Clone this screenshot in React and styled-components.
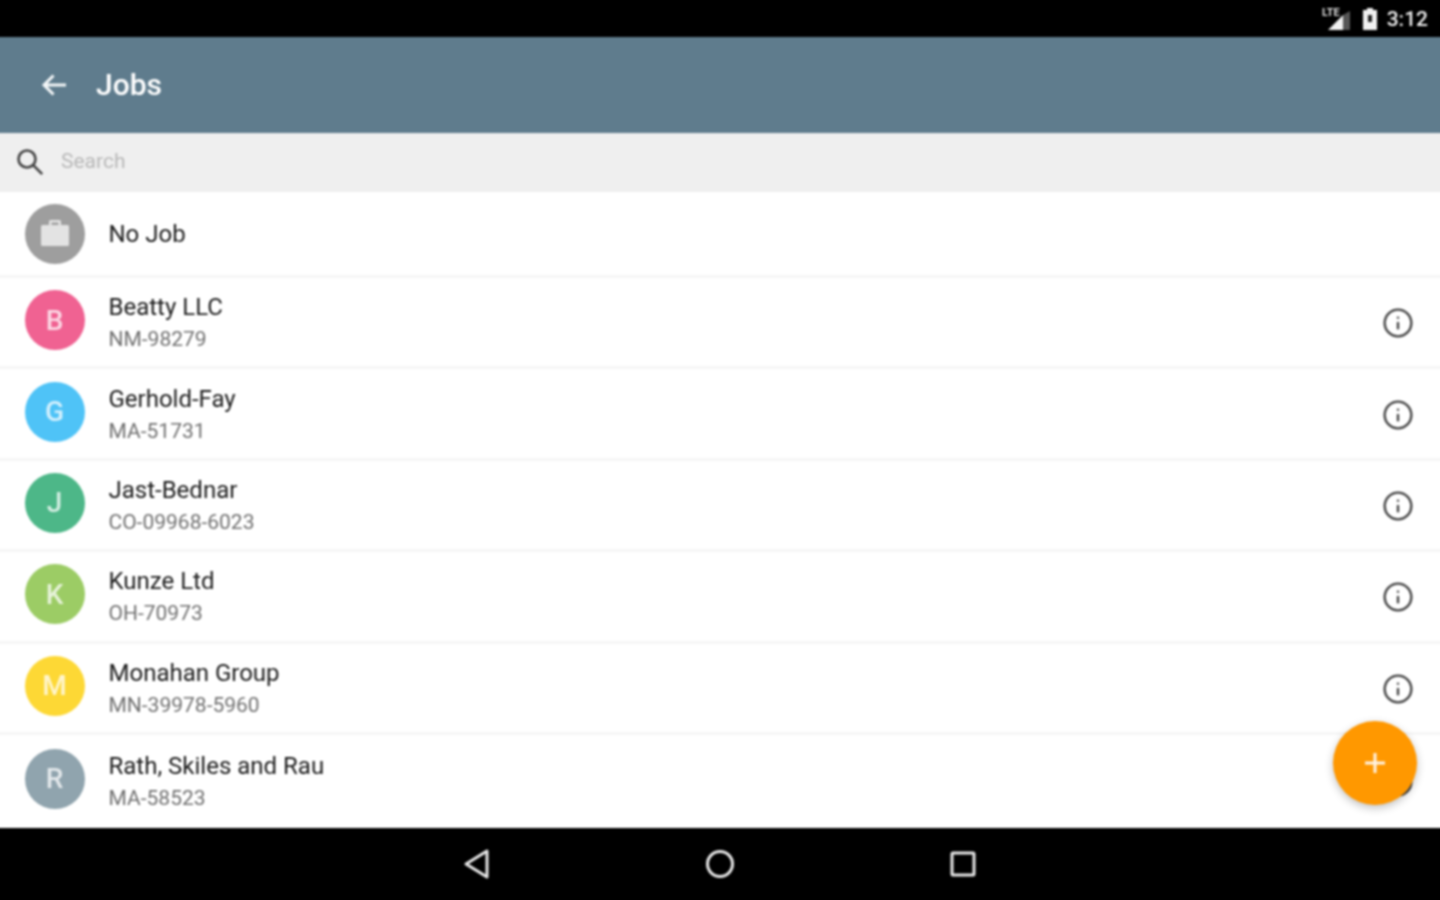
import React from "react";
import styled, { createGlobalStyle } from "styled-components";
import { Info } from "lucide-react";

const Global = createGlobalStyle`
  html, body { margin: 0; padding: 0; background: #fff; }
  body { font-family: Roboto, "Liberation Sans", sans-serif; overflow: hidden; }
`;

const Viewport = styled.div`
  width: 1440px;
  height: 900px;
  overflow: hidden;
`;
const Screen = styled.div`
  position: relative;
  width: 1456px;
  height: 916px;
  margin: -8px;
  display: flex;
  flex-direction: column;
  background: #fff;
  filter: blur(0.9px);
`;
const StatusBar = styled.div`
  height: 45px;
  background: #000;
  display: flex;
  align-items: center;
  justify-content: flex-end;
  padding: 8px 20px 0 0;
  box-sizing: border-box;
  color: #f0f0f0;
  flex: none;
`;
const StatusGap = styled.span`
  width: 9px;
`;
const Clock = styled.span`
  font-size: 21px;
  font-weight: 500;
  margin-left: 8px;
`;
const AppBar = styled.header`
  height: 96px;
  flex: none;
  background: #5f7c8d;
  display: flex;
  align-items: center;
  padding-left: 48px;
  color: #fff;
  box-sizing: border-box;
`;
const Title = styled.h1`
  margin: 0 0 0 28px;
  font-size: 30px;
  font-weight: 500;
  line-height: 1;
`;
const SearchBar = styled.div`
  height: 59px;
  flex: none;
  background: #efefef;
  display: flex;
  align-items: center;
  padding-left: 24px;
  box-sizing: border-box;
`;
const SearchHint = styled.span`
  font-size: 21px;
  color: #b8b8b8;
  margin: 0 0 4px 17px;
`;
const List = styled.div`
  flex: 1;
  display: flex;
  flex-direction: column;
`;
const Row = styled.div`
  height: ${(p) => p.$h}px;
  flex: none;
  box-sizing: border-box;
  display: flex;
  align-items: center;
  padding: 0 34px 0 32.500px;
  border-bottom: 3px solid #f6f6f6;
  &:last-child {
    border-bottom: none;
  }
`;
const Avatar = styled.div`
  width: 60px;
  height: 60px;
  border-radius: 50%;
  background: ${(p) => p.$color};
  color: rgba(255, 255, 255, 0.75);
  display: flex;
  align-items: center;
  justify-content: center;
  font-size: 28px;
  font-weight: 500;
  flex: none;
  margin-bottom: ${(p) => p.$lift || 0}px;
`;
const Texts = styled.div`
  margin-left: 24px;
  flex: 1;
  display: flex;
  flex-direction: column;
  gap: 4px;
  padding-top: ${(p) => p.$drop || 0}px;
`;
const Name = styled.div`
  font-size: 24px;
  line-height: 28px;
  color: #1c1c1c;
`;
const Code = styled.div`
  font-size: 21px;
  line-height: 28px;
  color: #707070;
`;
const InfoButton = styled.div`
  width: 32px;
  height: 32px;
  color: #444;
  display: flex;
  margin-top: 2px;
`;
const Fab = styled.button`
  position: absolute;
  left: 1340.500px;
  top: 729px;
  width: 84px;
  height: 84px;
  border-radius: 50%;
  border: none;
  padding: 0;
  background: #ff9800;
  box-shadow: 0 3px 8px rgba(0, 0, 0, 0.25);
  display: flex;
  align-items: center;
  justify-content: center;
`;
const NavBar = styled.nav`
  height: 80px;
  flex: none;
  background: #000;
  display: flex;
  align-items: center;
  justify-content: center;
  gap: 214px;
  padding-bottom: 8px;
  box-sizing: border-box;
`;

const Back = () => (
  <svg width="28" height="28" viewBox="0 0 28 28" fill="none" stroke="#f4f7f8" strokeWidth="3">
    <path d="M26 14H4M13.5 4.500 4 14l9.500 9.500" />
  </svg>
);
const SearchIcon = () => (
  <svg width="28" height="28" viewBox="0 0 28 28" fill="none" stroke="#444" strokeWidth="2.600">
    <circle cx="11" cy="10" r="8.500" />
    <path d="m17.200 16.200 9 9" />
  </svg>
);
const Case = () => (
  <svg width="32" height="32" viewBox="0 0 32 32">
    <path fill="#e3e3e3" fillRule="evenodd" d="M10 7V3.500A1.500 1.500 0 0 1 11.500 2h9A1.500 1.500 0 0 1 22 3.500V7h6.500A1.500 1.500 0 0 1 30 8.500v18a1.500 1.500 0 0 1-1.500 1.500h-25A1.500 1.500 0 0 1 2 26.500v-18A1.500 1.500 0 0 1 3.500 7zm2.500 0h7V4.500h-7z" />
  </svg>
);
const Plus = () => (
  <svg width="24" height="24" viewBox="0 0 24 24" stroke="#fff" strokeWidth="3" opacity=".9">
    <path d="M12 2v20M2 12h20" />
  </svg>
);
const Signal = () => (
  <svg width="30" height="26" viewBox="0 0 30 26">
    <path fill="#555" d="M28 5v19h-7V9z" />
    <path fill="#f0f0f0" d="M21 9v15H6z" />
    <text x="0" y="10" fontSize="11" fontWeight="700" fill="#ddd" fontFamily="Roboto, sans-serif">LTE</text>
  </svg>
);
const Battery = () => (
  <svg width="18" height="24" viewBox="0 0 18 24">
    <path fill="#f0f0f0" d="M6 1h6v2h4v20H2V3h4z" />
    <path fill="#222" d="M7 8h4v7H7z" />
  </svg>
);
const NavBack = () => (
  <svg width="28" height="32" viewBox="0 0 28 32" fill="none" stroke="#e8e8e8" strokeWidth="3" strokeLinejoin="round">
    <path d="M24 3v26L3 16z" />
  </svg>
);
const NavHome = () => (
  <svg width="30" height="30" viewBox="0 0 30 30" fill="none" stroke="#e8e8e8" strokeWidth="3">
    <circle cx="15" cy="15" r="12.500" />
  </svg>
);
const NavRecent = () => (
  <svg width="28" height="28" viewBox="0 0 28 28" fill="none" stroke="#e8e8e8" strokeWidth="3" strokeLinejoin="round">
    <rect x="3" y="3" width="22" height="22" rx="1" />
  </svg>
);

const jobs = [
  ["B", "#f06292", "Beatty LLC", "NM-98279"],
  ["G", "#4fc3f7", "Gerhold-Fay", "MA-51731"],
  ["J", "#4db788", "Jast-Bednar", "CO-09968-6023"],
  ["K", "#9ccc65", "Kunze Ltd", "OH-70973"],
  ["M", "#fdd835", "Monahan Group", "MN-39978-5960"],
  ["R", "#90a4ae", "Rath, Skiles and Rau", "MA-58523"],
];

export default function App() {
  return (
    <Viewport>
      <Global />
      <Screen>
        <StatusBar>
          <Signal />
          <StatusGap />
          <Battery />
          <Clock>3:12</Clock>
        </StatusBar>
        <AppBar>
          <Back />
          <Title>Jobs</Title>
        </AppBar>
        <SearchBar>
          <SearchIcon />
          <SearchHint>Search</SearchHint>
        </SearchBar>
        <List>
          <Row $h={86}>
            <Avatar $color="#9e9e9e"><Case /></Avatar>
            <Texts><Name>No Job</Name></Texts>
          </Row>
          {jobs.map(([letter, color, name, code]) => (
            <Row $h={91.4} key={name}>
              <Avatar $color={color} $lift={4}>{letter}</Avatar>
              <Texts $drop={2}>
                <Name>{name}</Name>
                <Code>{code}</Code>
              </Texts>
              <InfoButton><Info size={32} strokeWidth={1.8} /></InfoButton>
            </Row>
          ))}
        </List>
        <Fab aria-label="Add"><Plus /></Fab>
        <NavBar>
          <NavBack />
          <NavHome />
          <NavRecent />
        </NavBar>
      </Screen>
    </Viewport>
  );
}
